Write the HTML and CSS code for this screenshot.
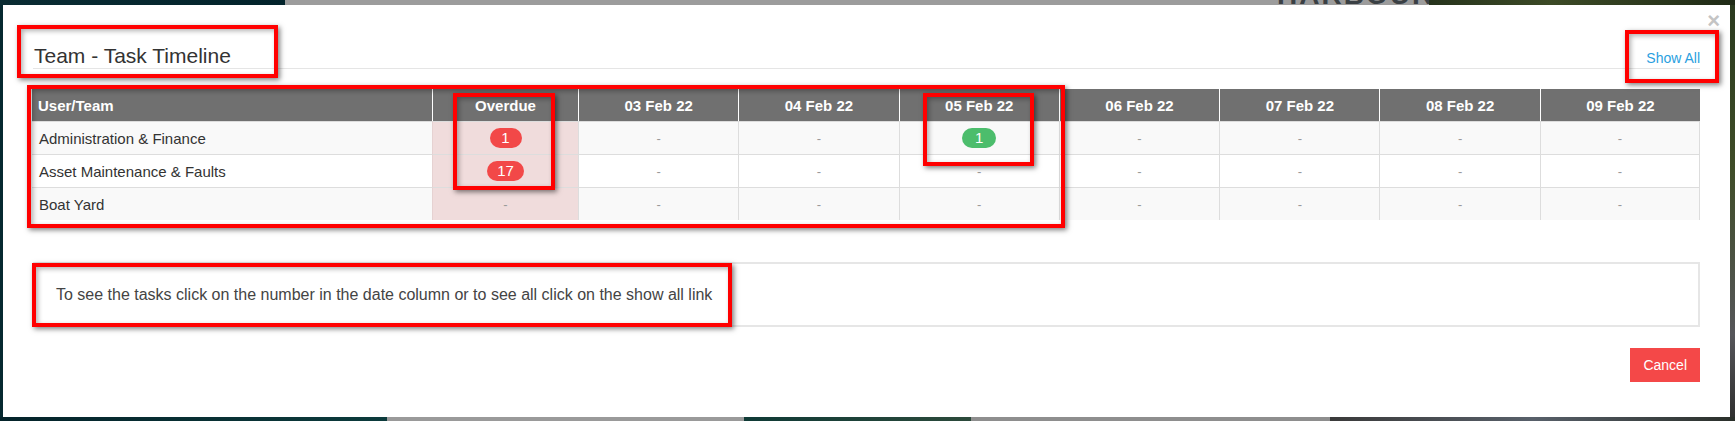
FILE: index.html
```html
<!DOCTYPE html>
<html lang="en">
<head>
<meta charset="utf-8">
<title>Team - Task Timeline</title>
<link rel="stylesheet" href="styles.css">
</head>
<body>
<div class="screen">
  <div class="strip strip-top">
    <span class="seg seg-teal-top"></span>
    <span class="seg seg-gray-top"><span class="bg-logo">HARBOUR</span></span>
    <span class="seg seg-green-top"></span>
  </div>
  <div class="middle">
    <div class="edge edge-left"></div>
    <div class="modal">
      <button class="close" type="button">&times;</button>
      <div class="modal-header">
        <h4 class="modal-title">Team - Task Timeline</h4>
        <a class="show-all" href="#">Show All</a>
      </div>
      <table class="timeline">
        <colgroup>
          <col class="col-user">
          <col class="col-overdue">
          <col class="col-date"><col class="col-date"><col class="col-date"><col class="col-date"><col class="col-date"><col class="col-date"><col class="col-date">
        </colgroup>
        <thead>
          <tr>
            <th class="th-user">User/Team</th>
            <th>Overdue</th>
            <th>03 Feb 22</th>
            <th>04 Feb 22</th>
            <th>05 Feb 22</th>
            <th>06 Feb 22</th>
            <th>07 Feb 22</th>
            <th>08 Feb 22</th>
            <th>09 Feb 22</th>
          </tr>
        </thead>
        <tbody>
          <tr class="odd">
            <td class="td-user">Administration &amp; Finance</td>
            <td class="td-overdue"><span class="badge badge-red">1</span></td>
            <td class="dash">-</td>
            <td class="dash">-</td>
            <td class="dash"><span class="badge badge-green">1</span></td>
            <td class="dash">-</td>
            <td class="dash">-</td>
            <td class="dash">-</td>
            <td class="dash">-</td>
          </tr>
          <tr class="even">
            <td class="td-user">Asset Maintenance &amp; Faults</td>
            <td class="td-overdue"><span class="badge badge-red">17</span></td>
            <td class="dash">-</td>
            <td class="dash">-</td>
            <td class="dash">-</td>
            <td class="dash">-</td>
            <td class="dash">-</td>
            <td class="dash">-</td>
            <td class="dash">-</td>
          </tr>
          <tr class="odd">
            <td class="td-user">Boat Yard</td>
            <td class="td-overdue dash">-</td>
            <td class="dash">-</td>
            <td class="dash">-</td>
            <td class="dash">-</td>
            <td class="dash">-</td>
            <td class="dash">-</td>
            <td class="dash">-</td>
            <td class="dash">-</td>
          </tr>
        </tbody>
      </table>
      <div class="info">To see the tasks click on the number in the date column or to see all click on the show all link</div>
      <div class="modal-footer">
        <button class="btn-cancel" type="button">Cancel</button>
      </div>
    </div>
    <div class="edge edge-right"></div>
  </div>
  <div class="strip strip-bottom">
    <span class="seg seg-teal-bottom"></span>
    <span class="seg seg-gray-b1"></span>
    <span class="seg seg-green-b1"></span>
    <span class="seg seg-gray-b2"></span>
    <span class="seg seg-dark-b2"></span>
  </div>

  <div class="mark mark-title"></div>
  <div class="mark mark-table"></div>
  <div class="mark mark-overdue"></div>
  <div class="mark mark-feb05"></div>
  <div class="mark mark-showall"></div>
  <div class="mark mark-info"></div>
</div>
</body>
</html>
```
FILE: styles.css
```css
* { box-sizing: border-box; }
html, body { margin: 0; padding: 0; }
body {
  background: #06262c;
  font-family: "Liberation Sans", Arial, sans-serif;
}
.screen {
  position: relative;
  width: 1735px;
  height: 421px;
  overflow: hidden;
  display: flex;
  flex-direction: column;
}

/* background strips around the modal */
.strip { display: flex; overflow: hidden; flex: none; }
.strip-top { height: 5px; }
.strip-bottom { height: 4px; }
.seg { display: block; height: 100%; flex: none; overflow: hidden; }
.seg-teal-top { width: 285px; background: linear-gradient(to right, #0a2c33, #02232b); }
.seg-gray-top { width: 1144px; background: #9c9c9c; }
.seg-green-top { flex: 1; background: linear-gradient(to right, #26331c, #3c4a26 40%, #1f2a16); }
.bg-logo {
  display: block;
  margin: -19px 0 0 992px;
  font: bold 28px/28px "Liberation Sans", Arial, sans-serif;
  letter-spacing: 2px;
  color: #3a4044;
}
.seg-teal-bottom { width: 387px; background: linear-gradient(to right, #04232a, #0c3b3c); }
.seg-gray-b1 { width: 357px; background: #9a9a9a; }
.seg-green-b1 { width: 227px; background: linear-gradient(to right, #0f3a36, #2c4a3b); }
.seg-gray-b2 { width: 359px; background: #8e8e8e; }
.seg-dark-b2 { flex: 1; background: linear-gradient(to right, #3a3a3a, #58606a 50%, #2a2f2a); }

.middle { display: flex; height: 412px; flex: none; }
.edge { flex: none; height: 100%; }
.edge-left { width: 3px; background: #062930; }
.edge-right { width: 5px; background: linear-gradient(to bottom, #2a3a1e, #3f4d28 40%, #56565a 80%, #303030); }

/* modal */
.modal {
  position: relative;
  width: 1727px;
  height: 412px;
  background: #fff;
  padding: 0 30px 0 29px;
}
.close {
  position: absolute;
  top: 5px;
  right: 10px;
  padding: 0;
  border: 0;
  background: none;
  font: bold 22px/22px "Liberation Sans", Arial, sans-serif;
  color: #c4c4c4;
}
.modal-header {
  display: flex;
  justify-content: space-between;
  align-items: baseline;
  padding-top: 39px;
  margin-left: 1px;
  border-bottom: 1px solid #e5e5e5;
}
.modal-title {
  margin: 0 0 0 1px;
  font: normal 21px/24px "Liberation Sans", Arial, sans-serif;
  color: #333;
}
.show-all {
  font-size: 14px;
  color: #2a9fe0;
  text-decoration: none;
}

/* table */
.timeline {
  margin-top: 20px;
  width: 1668px;
  table-layout: fixed;
  border-collapse: separate;
  border-spacing: 0;
  font-size: 15px;
  color: #333;
}
.col-user { width: 400px; }
.col-overdue { width: 146px; }
.col-date { width: 160.3px; }
.timeline th {
  height: 32px;
  padding: 0 6px;
  background: #707070;
  color: #fff;
  font-weight: bold;
  text-align: center;
  border-left: 1px solid #fff;
}
.timeline th.th-user { text-align: left; border-left: 0; }
.timeline td {
  height: 33px;
  padding: 0 6px;
  text-align: center;
  border-top: 1px solid #dddddd;
  border-left: 1px solid #dddddd;
}
.timeline td:last-child { border-right: 1px solid #dddddd; }
.timeline td.td-user { text-align: left; border-left: 0; padding-left: 7px; }
.timeline tr.odd td { background: #f9f9f9; }
.timeline tr.even td { background: #fff; }
.timeline tr td.td-overdue { background: #f0dcdc; border-left-color: #e6d2d2; }
.timeline td.dash { color: #9a9a9a; font-size: 13px; }
.badge {
  display: inline-block;
  min-width: 32px;
  height: 20px;
  padding: 0 10px;
  border-radius: 10px;
  font: normal 15px/20px "Liberation Sans", Arial, sans-serif;
  color: #fff;
  text-align: center;
  vertical-align: middle;
}
.badge-red { background: #f24848; }
.badge-green { background: #4cbd6c; min-width: 34px; }

/* info */
.info {
  margin-top: 42px;
  margin-left: 1px;
  height: 65px;
  border: 2px solid #e6e6e6;
  display: flex;
  align-items: center;
  padding-left: 21px;
  font-size: 16px;
  color: #444;
}

.modal-footer {
  display: flex;
  justify-content: flex-end;
  margin-top: 21px;
}
.btn-cancel {
  height: 34px;
  padding: 0 13px;
  border: 0;
  background: #f44848;
  color: #fff;
  font: normal 14px/34px "Liberation Sans", Arial, sans-serif;
}

/* red annotation boxes drawn over the screenshot */
.mark {
  position: absolute;
  border: 4px solid #ff0000;
  box-shadow: 2px 2px 5px rgba(0, 0, 0, 0.5), inset 2px 2px 5px rgba(0, 0, 0, 0.3);
  pointer-events: none;
}
.mark-title { left: 17px; top: 25px; width: 261px; height: 53px; }
.mark-table { left: 27px; top: 85px; width: 1038px; height: 143px; }
.mark-overdue { left: 453px; top: 93px; width: 102px; height: 97px; }
.mark-feb05 { left: 923px; top: 93px; width: 111px; height: 73px; }
.mark-showall { left: 1625px; top: 30px; width: 94px; height: 53px; }
.mark-info { left: 32px; top: 263px; width: 700px; height: 64px; }
```
